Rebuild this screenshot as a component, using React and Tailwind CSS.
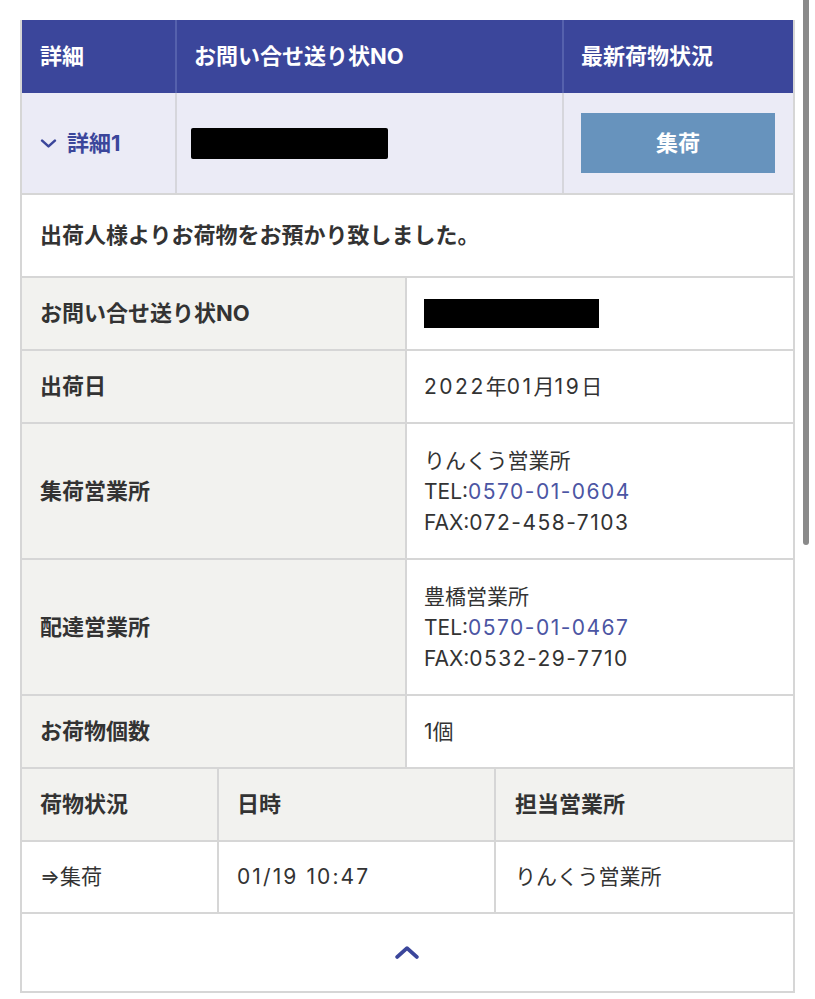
import React from "react";

const font = { fontFamily: 'Inter, "Noto Sans CJK JP", "Noto Sans", sans-serif' };

function Chevron({ up = false, className = "" }) {
  return (
    <svg viewBox="0 0 24 12" className={className} fill="none" stroke="#3b469b" strokeWidth="3.6" strokeLinecap="round" strokeLinejoin="round">
      {up ? <polyline points="3,10 12,2 21,10" /> : <polyline points="3,2 12,10 21,2" />}
    </svg>
  );
}

function KV({ k, h, children }) {
  return (
    <div className={`grid grid-cols-[385px_1fr] border-b-2 border-[#d6d6d6] ${h}`}>
      <div className="flex items-center bg-[#f2f2ef] pl-[18px] font-bold text-[22px] border-r-2 border-[#d6d6d6]">{k}</div>
      <div className="flex items-center pl-[17px] bg-white">{children}</div>
    </div>
  );
}

export default function App() {
  return (
    <div className="relative min-h-[999px] bg-white text-[#333] text-[21px]" style={font}>
      <div className="absolute right-[6px] top-0 h-[545px] w-[6px] rounded-b-full bg-[#8a8a8a]" />
      <div className="pl-[20px] pt-[20px]">
        <div className="w-[775px] border-x-2 border-[#d6d6d6]">
          {/* header */}
          <div className="grid grid-cols-[155px_387px_1fr] h-[73px] bg-[#3b469b] text-white font-bold text-[22px]">
            <div className="flex items-center pl-[18px] border-r-2 border-[#5561ad]">詳細</div>
            <div className="flex items-center pl-[17px] border-r-2 border-[#5561ad]">お問い合せ送り状NO</div>
            <div className="flex items-center pl-[17px]">最新荷物状況</div>
          </div>
          {/* row 2 */}
          <div className="grid grid-cols-[155px_387px_1fr] h-[102px] bg-[#ebebf6] border-b-2 border-[#d6d6d6]">
            <div className="flex items-center gap-[10px] pl-[18px] border-r-2 border-[#d6d6dc] text-[#3b469b] font-bold text-[22px]">
              <Chevron className="w-[17px] h-[9px]" />
              <span>詳細1</span>
            </div>
            <div className="flex items-center pl-[14px] border-r-2 border-[#d6d6dc]">
              <div className="h-[31px] w-[197px] bg-black rounded-[2px]" />
            </div>
            <div className="flex items-center pl-[17px] pr-[18px]">
              <div className="flex h-[60px] w-full items-center justify-center bg-[#6793bd] text-white font-bold text-[22px]">集荷</div>
            </div>
          </div>
          {/* message */}
          <div className="flex h-[83px] items-center pl-[18px] border-b-2 border-[#d6d6d6] font-bold text-[22px] bg-white">
            出荷人様よりお荷物をお預かり致しました。
          </div>
          <KV k="お問い合せ送り状NO" h="h-[73px]">
            <div className="h-[29px] w-[175px] bg-black" />
          </KV>
          <KV k="出荷日" h="h-[73px]">
            <span>
              <span className="tracking-[0.12em]">2022</span>年<span className="tracking-[0.12em]">01</span>月<span className="tracking-[0.12em]">19</span>日
            </span>
          </KV>
          <KV k="集荷営業所" h="h-[136px]">
            <div className="leading-[31px]">
              <div>りんくう営業所</div>
              <div>TEL:<span className="text-[#4b55a3] tracking-[0.07em]">0570-01-0604</span></div>
              <div>FAX:<span className="tracking-[0.07em]">072-458-7103</span></div>
            </div>
          </KV>
          <KV k="配達営業所" h="h-[136px]">
            <div className="leading-[31px]">
              <div>豊橋営業所</div>
              <div>TEL:<span className="text-[#4b55a3] tracking-[0.07em]">0570-01-0467</span></div>
              <div>FAX:<span className="tracking-[0.07em]">0532-29-7710</span></div>
            </div>
          </KV>
          <KV k="お荷物個数" h="h-[73px]">1個</KV>
          {/* status table */}
          <div className="grid grid-cols-[197px_277px_1fr] h-[73px] bg-[#f2f2ef] border-b-2 border-[#d6d6d6] font-bold text-[22px]">
            <div className="flex items-center pl-[18px] border-r-2 border-[#d6d6d6]">荷物状況</div>
            <div className="flex items-center pl-[18px] border-r-2 border-[#d6d6d6]">日時</div>
            <div className="flex items-center pl-[19px]">担当営業所</div>
          </div>
          <div className="grid grid-cols-[197px_277px_1fr] h-[72px] bg-white border-b-2 border-[#d6d6d6]">
            <div className="flex items-center pl-[18px] border-r-2 border-[#d6d6d6]">⇒集荷</div>
            <div className="flex items-center pl-[18px] border-r-2 border-[#d6d6d6]">
              <span className="tracking-[0.1em]">01/19 10:47</span>
            </div>
            <div className="flex items-center pl-[19px]">りんくう営業所</div>
          </div>
          <div className="flex h-[79px] items-center justify-center bg-white border-b-2 border-[#d6d6d6]">
            <Chevron up className="w-[26px] h-[13px] mr-[2px]" />
          </div>
        </div>
      </div>
    </div>
  );
}
